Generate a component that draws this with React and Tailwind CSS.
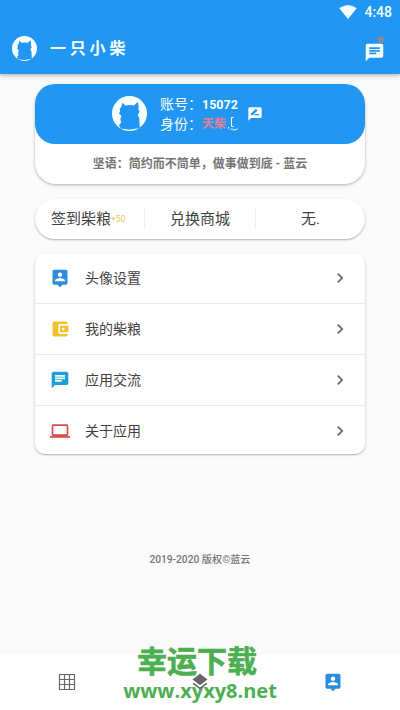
import React from 'react';
import {
  MdSignalWifi4Bar,
  MdChat,
  MdRateReview,
  MdAccountBalanceWallet,
  MdLaptop,
  MdChevronRight,
  MdLayers,
} from 'react-icons/md';

const PersonPin = ({ className }) => (
  <svg viewBox="0 0 24 24" fill="currentColor" className={className}>
    <path d="M19 2H5c-1.11 0-2 .9-2 2v14c0 1.1.89 2 2 2h4l3 3 3-3h4c1.1 0 2-.9 2-2V4c0-1.1-.9-2-2-2zm-7 3.3c1.49 0 2.7 1.21 2.7 2.7s-1.21 2.7-2.7 2.7S9.3 9.49 9.3 8s1.21-2.7 2.7-2.7zM18 16H6v-.9c0-2 4-3.1 6-3.1s6 1.1 6 3.1v.9z" />
  </svg>
);

const Grid = ({ className }) => (
  <svg viewBox="0 0 18 18" fill="none" stroke="currentColor" strokeWidth="1.2" className={className}>
    <path d="M1.5 1.5h15v15h-15zM6.5 1.5v15M11.5 1.5v15M1.5 6.5h15M1.5 11.5h15" />
  </svg>
);

// white disc with the shiba silhouette cut out
const Avatar = ({ className }) => (
  <svg viewBox="0 0 34 34" className={className}>
    <circle cx="17" cy="17" r="17" fill="#f7ffff" />
    <path
      fill="#2196f3"
      d="M10 6.5 L13 9.2 Q17.5 8.2 21.5 9.2 L24.8 5.8 L26 10 L25.6 13 L26.8 15 L25 18.5 Q27 21 26.6 24 L27 31 L17 32.8 L8.5 31.5 L6.8 28.5 L9 25.5 Q7.2 23 9.2 19.5 L6.8 17 L8 15 L7.3 12.5 L9 11 Z"
    />
  </svg>
);

const menu = [
  { id: 1, name: '头像设置', icon: PersonPin, color: 'text-[#2b8ddb]' },
  { id: 2, name: '我的柴粮', icon: MdAccountBalanceWallet, color: 'text-[#f2c029]' },
  { id: 3, name: '应用交流', icon: MdChat, color: 'text-[#1c9fd6]' },
  { id: 4, name: '关于应用', icon: MdLaptop, color: 'text-[#d84b48]' },
];

const App = () => {
  return (
    <div className="flex h-[710px] w-[400px] flex-col overflow-hidden bg-[#fafafa] font-['Roboto','Noto_Sans_CJK_SC',sans-serif] text-[#424242]">
      <header className="h-[74px] shrink-0 bg-[#2196f3] text-[#f5ffff] shadow-[0_1px_4px_rgba(0,0,0,0.35)]">
        <div className="flex h-6 items-center justify-end pr-2">
          <MdSignalWifi4Bar className="mr-[7px] size-[18px]" />
          <span className="text-[14px] leading-6 font-medium">4:48</span>
        </div>
        <div className="flex h-[50px] items-center pr-[15px] pl-3">
          <Avatar className="mb-[1px] size-[25px]" />
          <h1 className="ml-[13px] text-[16px] leading-6 font-bold tracking-[3.8px]">一只小柴</h1>
          <div className="relative mt-[7px] ml-auto">
            <span className="absolute -top-[6px] right-[1px] size-[7px] rounded-full bg-[#7d8b99]"></span>
            <MdChat className="relative size-[21px]" />
          </div>
        </div>
      </header>

      <main className="flex flex-col px-[35px] pt-[10px]">
        <section className="h-[100px] rounded-[21px] bg-white shadow-[0_1px_3px_rgba(0,0,0,0.3)]">
          <div className="flex h-[60px] items-center rounded-[20px] bg-[#2196f3] pl-[77px] text-[#f5ffff]">
            <Avatar className="mb-[1px] size-[35px]" />
            <div className="ml-[13px] w-[79px] text-[14px] leading-5 whitespace-nowrap">
              <p className="h-5">账号：<b className="text-[12.5px] font-bold">15072</b></p>
              <p className="flex h-5">
                身份：<b className="text-[12px] font-bold text-[#e57f8e]">天柴</b>
                <svg viewBox="0 0 10 17" className="ml-[2px] h-[17px] w-[10px]" fill="none" stroke="currentColor">
                  <path d="M5.5 3.5 H3.5 V12.5 H5.5" />
                  <path d="M0.5 13 V14.7 M2.5 15.5 L4 14.8 Q5.5 17 7 15.5 Q8.5 16.5 9.5 14.5" />
                </svg>
              </p>
            </div>
            <MdRateReview className="ml-2 size-4" />
          </div>
          <p className="pt-[1px] text-center text-[12px] leading-[38px] font-bold text-[#757575]">坚语：简约而不简单，做事做到底 - 蓝云</p>
        </section>

        <section className="mt-[15px] flex h-10 items-center rounded-full bg-white text-[15px] shadow-[0_1px_2px_rgba(0,0,0,0.3)]">
          <div className="flex w-[109px] items-center pl-4 whitespace-nowrap">
            签到柴粮<span className="text-[8.5px] text-[#ecc552]">+50</span>
          </div>
          <div className="flex h-5 w-[112px] items-center justify-center border-x border-[#eeeeee]">兑换商城</div>
          <div className="flex-1 text-center">无.</div>
        </section>

        <section className="mt-[15px] h-[200px] rounded-[10px] bg-white shadow-[0_1px_2px_rgba(0,0,0,0.3)]">
          {menu.map((item) => (
            <div key={item.id} className="flex h-[51px] items-center border-b border-[#eaeaea] px-[15px] first:h-[50px] first:pb-[1px] last:border-b-0 last:pb-[1px]">
              <item.icon className={`size-5 ${item.color}`} />
              <span className="ml-[15px] text-[14px]">{item.name}</span>
              <MdChevronRight className="ml-auto size-5 text-[#666666]" />
            </div>
          ))}
        </section>

        <p className="mt-[98px] text-center text-[10.2px] leading-4 font-medium text-[#757575]">2019-2020 版权©蓝云</p>
      </main>

      <nav className="relative mt-auto flex h-[55px] items-center bg-white pb-[1px] text-[#666666]">
        <div className="flex flex-1 justify-center"><Grid className="size-[18px]" /></div>
        <div className="flex flex-1 justify-center"><MdLayers className="relative z-10 size-5" /></div>
        <div className="flex flex-1 justify-center"><PersonPin className="size-5 text-[#2b8ddb]" /></div>
        <div className="absolute inset-x-0 -top-[13px] text-center font-bold whitespace-nowrap text-[#4caf50]">
          <p className="pr-[6px] font-['Noto_Sans_CJK_SC',sans-serif] text-[30px] leading-[34px] [-webkit-text-stroke:0.6px_#4caf50]">幸运下载</p>
          <p className="mt-[1px] font-['Open_Sans',sans-serif] text-[20px] leading-[27px]">www.xyxy8.net</p>
        </div>
      </nav>
    </div>
  );
};

export default App;
